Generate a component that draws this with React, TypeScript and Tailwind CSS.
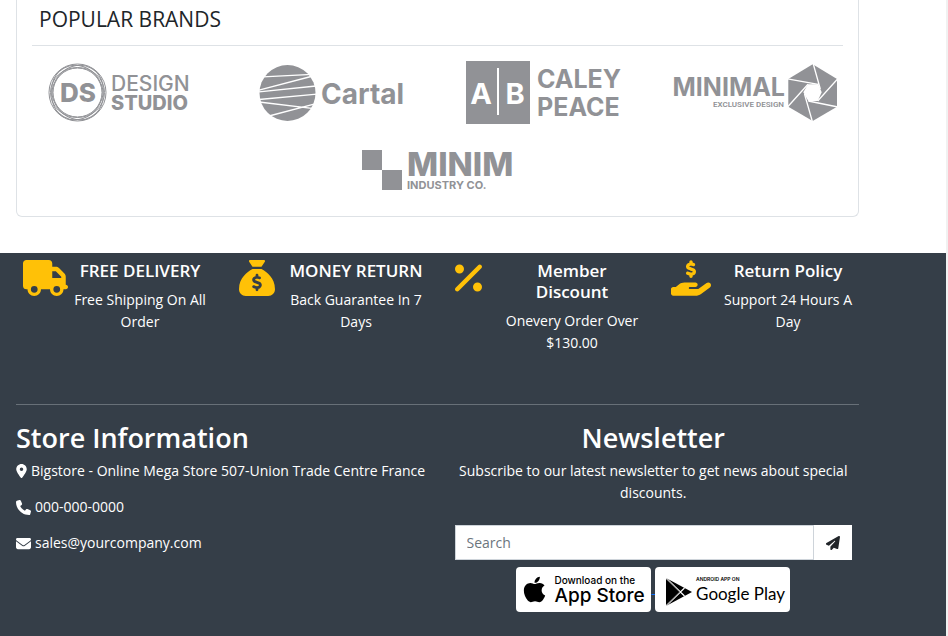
import type { ReactNode } from "react";
import {
  FaApple,
  FaEnvelope,
  FaHandHoldingDollar,
  FaLocationDot,
  FaPaperPlane,
  FaPercent,
  FaPhone,
  FaSackDollar,
  FaTruck,
} from "react-icons/fa6";

function BrandLogo({ label, children }: { label: string; children: ReactNode }) {
  return (
    <svg
      role="img"
      aria-label={label}
      width="171"
      height="64"
      viewBox="0 0 171 64"
      className="shrink-0 fill-[#919296] font-['Inter',sans-serif]"
    >
      {children}
    </svg>
  );
}

function DesignStudio() {
  return (
    <BrandLogo label="Design Studio">
      <g fill="none" stroke="#919296" strokeWidth="1">
        <circle cx="43.5" cy="31.5" r="28.5" />
        <ellipse cx="43.5" cy="31.5" rx="25" ry="28" transform="rotate(30 43.5 31.5)" />
        <ellipse cx="43.5" cy="31.5" rx="25" ry="28" transform="rotate(-30 43.5 31.5)" />
        <ellipse cx="43.5" cy="31.5" rx="25" ry="27" transform="rotate(90 43.5 31.5)" />
        <circle cx="43.5" cy="31.5" r="24.5" />
      </g>
      <text x="44" y="41" textAnchor="middle" fontSize="26" fontWeight="800">DS</text>
      <text x="77" y="30" fontSize="21" fontWeight="500">DESIGN</text>
      <text x="77" y="49" fontSize="20" fontWeight="800">STUDIO</text>
    </BrandLogo>
  );
}

function Cartal() {
  return (
    <BrandLogo label="Cartal">
      <circle cx="41.5" cy="32" r="28" />
      <g stroke="#fff" strokeWidth="1.3">
        <path d="M17 15.8 66 13.3M13 29.2 65 15.5M13 30.8 70 25M13 38.5 71 33.2M13 41 68 47.6M23 55 69 42.8" />
      </g>
      <text x="75" y="43" fontSize="28" fontWeight="700">Cartal</text>
    </BrandLogo>
  );
}

function CaleyPeace() {
  return (
    <BrandLogo label="Caley Peace">
      <rect x="8" y="0" width="64" height="63" />
      <rect x="39" y="7" width="2" height="47" fill="#fff" />
      <g fill="#fff" fontSize="29" fontWeight="700" textAnchor="middle">
        <text x="23" y="43">A</text>
        <text x="57" y="43">B</text>
      </g>
      <g fontSize="25" fontWeight="700">
        <text x="79" y="27">CALEY</text>
        <text x="79" y="55">PEACE</text>
      </g>
    </BrandLogo>
  );
}

function Minimal() {
  return (
    <BrandLogo label="Minimal Exclusive Design">
      <path d="M142.7 3.3 167 18V45.7L142.7 60 118.3 45.7V18Z" />
      <path fill="#fff" d="M148.3 23.3 151.7 31.3 147.7 40H138.3L133.3 31.3 138 23.3Z" />
      <path
        fill="none"
        stroke="#fff"
        strokeWidth="1.3"
        d="M143 2 150.3 28M168 17.5 147.7 40M168 46 138.3 40M142.5 61 134.5 33M117.5 46 138 23.3M117.5 17.8 148.3 23.3"
      />
      <text x="115" y="35" textAnchor="end" fontSize="25" fontWeight="700">MINIMAL</text>
      <text x="114" y="46" textAnchor="end" fontSize="8" fontWeight="600" className="font-['Roboto',sans-serif]">
        EXCLUSIVE DESIGN
      </text>
    </BrandLogo>
  );
}

function Minim() {
  return (
    <BrandLogo label="Minim Industry Co.">
      <rect x="10" y="12" width="20" height="20" />
      <rect x="30" y="32" width="20" height="20" />
      <text x="55" y="38" fontSize="33" fontWeight="800">MINIM</text>
      <text x="55" y="51" fontSize="11" fontWeight="700">INDUSTRY CO.</text>
    </BrandLogo>
  );
}

function Feature({ icon, title, text }: { icon: ReactNode; title: string; text: string }) {
  return (
    <li className="flex">
      <div className="w-[45px] shrink-0 text-[#ffc107]">{icon}</div>
      <div className="flex-1 text-center">
        <h3 className="mb-2 text-[17px] leading-[21px] font-semibold">{title}</h3>
        <p>{text}</p>
      </div>
    </li>
  );
}

function AppStoreBadge() {
  return (
    <span className="inline-flex h-[45px] w-[135px] items-center rounded-[4px] bg-white pl-1 text-left align-middle font-['Inter',sans-serif] text-black">
      <FaApple className="size-[29px] shrink-0" />
      <span className="flex flex-col pl-[5px] whitespace-nowrap">
        <span className="text-[10px] leading-[12px] font-medium">Download on the</span>
        <span className="text-[19px] leading-[19px] font-medium">App Store</span>
      </span>
    </span>
  );
}

function GooglePlayBadge() {
  return (
    <span className="inline-flex h-[45px] w-[135px] items-center rounded-[4px] bg-white pl-[10px] text-left align-middle text-black">
      <svg width="27" height="30" viewBox="0 0 27 30" aria-hidden="true" className="mt-1 shrink-0">
        <path d="M1 1 27 15 1 29Z" />
        <path d="M1 1 19.5 19M1 29 19.5 11" stroke="#fff" strokeWidth="1.2" />
        <path d="M1.5 1.5 15 15 1.5 28.5" fill="none" stroke="#777" strokeWidth="0.6" />
      </svg>
      <span className="flex flex-col pl-1 whitespace-nowrap">
        <span className="font-['Inter',sans-serif] text-[5px] leading-[7px] font-semibold">ANDROID APP ON</span>
        <span className="font-['Lato',sans-serif] text-[17px] leading-[21px]">Google Play</span>
      </span>
    </span>
  );
}

export default function App() {
  return (
    <div className="min-h-screen bg-[#f1f1f1] pr-[2px] font-['Open_Sans','Noto_Sans',sans-serif] text-[14px] leading-[22px]">
      <main className="bg-white pr-[87px] pb-9 pl-4">
        <section className="rounded-b-md border border-t-0 border-[#dee2e6] pb-[14px]">
          <h2 className="mx-[15px] mb-[15px] border-b border-[#dee2e6] px-[7px] pt-[7px] pb-[14px] text-[21px] leading-6 text-[#212529]">
            POPULAR BRANDS
          </h2>
          <div className="flex flex-wrap justify-center gap-x-[41px] gap-y-[13px]">
            <DesignStudio />
            <Cartal />
            <CaleyPeace />
            <Minimal />
            <Minim />
          </div>
        </section>
      </main>

      <footer className="min-h-[383px] bg-[#353e48] pt-[7px] pr-[87px] pb-6 pl-4 text-white">
        <ul className="-mr-px grid min-h-[144px] grid-cols-4 gap-[27px] pl-[7px]">
          <Feature icon={<FaTruck className="h-9 w-[45px]" />} title="FREE DELIVERY" text="Free Shipping On All Order" />
          <Feature icon={<FaSackDollar className="size-9" />} title="MONEY RETURN" text="Back Guarantee In 7 Days" />
          <Feature icon={<FaPercent className="h-9 w-[27px]" />} title="Member Discount" text="Onevery Order Over $130.00" />
          <Feature icon={<FaHandHoldingDollar className="h-9 w-10" />} title="Return Policy" text="Support 24 Hours A Day" />
        </ul>

        <hr className="border-[#687078]" />

        <div className="grid grid-cols-2 pt-[15px]">
          <section>
            <h2 className="mb-[5px] text-[27px] leading-[35px] font-semibold">Store Information</h2>
            <address className="flex flex-col gap-[14px] not-italic">
              <p className="flex items-center gap-1">
                <FaLocationDot className="h-[14px] w-[11px]" />
                Bigstore - Online Mega Store 507-Union Trade Centre France
              </p>
              <p className="flex items-center gap-1">
                <FaPhone className="size-[15px]" />
                000-000-0000
              </p>
              <p className="flex items-center gap-1">
                <FaEnvelope className="size-[15px]" />
                sales@yourcompany.com
              </p>
            </address>
          </section>

          <section className="pr-[7px] pl-[17px] text-center">
            <h2 className="mb-[5px] text-[27px] leading-[35px] font-semibold">Newsletter</h2>
            <p className="mb-[21px]">Subscribe to our latest newsletter to get news about special discounts.</p>
            <form className="flex h-[35px] bg-white" onSubmit={(event) => event.preventDefault()}>
              <input
                type="text"
                aria-label="Search"
                placeholder="Search"
                className="min-w-0 flex-1 border border-[#ced4da] px-[11px] text-[#212529] outline-none placeholder:text-[#6c757d]"
              />
              <button type="submit" aria-label="Subscribe" className="flex w-[38px] items-center justify-center text-[#212529]">
                <FaPaperPlane className="size-[14px]" />
              </button>
            </form>
            <div className="pt-[7px]">
              <a href="#app-store" className="text-[#0d6efd] underline">
                <AppStoreBadge />{" "}
              </a>
              <a href="#google-play">
                <GooglePlayBadge />
              </a>
            </div>
          </section>
        </div>
      </footer>
    </div>
  );
}
